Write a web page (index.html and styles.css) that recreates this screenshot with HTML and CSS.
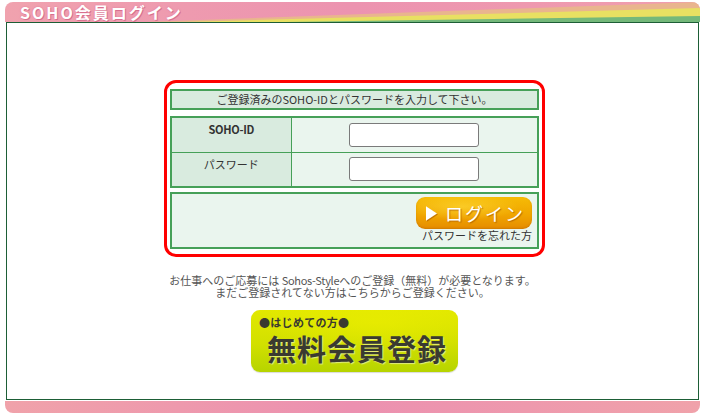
FILE: index.html
```html
<!DOCTYPE html>
<html lang="ja">
<head>
<meta charset="utf-8">
<title>SOHO会員ログイン</title>
<link rel="stylesheet" href="styles.css">
</head>
<body>
<div class="page">
  <div class="header">
    <svg class="stripes" viewBox="0 0 695 20" preserveAspectRatio="none" aria-hidden="true">
      <polygon points="140,20 695,0 695,20" fill="#e9b58e"/>
      <polygon points="180,20 695,6 695,20" fill="#e8e062"/>
      <polygon points="280,20 695,14 695,20" fill="#74b87a"/>
    </svg>
    <h1 class="title">SOHO会員ログイン</h1>
  </div>
  <div class="content">
    <div class="login-box">
      <div class="notice">ご登録済みのSOHO-IDとパスワードを入力して下さい。</div>
      <table class="form-table">
        <tr>
          <th class="label label-id">SOHO-ID</th>
          <td class="field"><input class="text-input" type="text"></td>
        </tr>
        <tr>
          <th class="label">パスワード</th>
          <td class="field"><input class="text-input" type="password"></td>
        </tr>
      </table>
      <div class="actions">
        <button class="login-btn" type="button">
          <svg class="play" viewBox="0 0 12 16" aria-hidden="true"><polygon points="0,0 12,8 0,16" fill="#fff"/></svg>
          <span>ログイン</span>
        </button>
        <a class="forgot" href="#">パスワードを忘れた方</a>
      </div>
    </div>
    <p class="info">お仕事へのご応募には <span class="brand">Sohos-Style</span>へのご登録（無料）が必要となります。<br>まだご登録されてない方はこちらからご登録ください。</p>
    <a class="register-btn" href="#">
      <span class="reg-small">●はじめての方●</span>
      <span class="reg-big">無料会員登録</span>
    </a>
  </div>
  <div class="footer"></div>
</div>
</body>
</html>
```

FILE: styles.css
```css
html, body {
  margin: 0;
  padding: 0;
  background: #fff;
}

body {
  font-family: "Noto Sans CJK JP", "Noto Sans", sans-serif;
  color: #333;
}

.page {
  width: 695px;
  margin: 2px 0 0 5px;
}

.header {
  position: relative;
  height: 20px;
  border-radius: 8px 8px 0 0;
  background: linear-gradient(to right, #f0a2ae 0%, #ec93b0 50%, #f09eae 100%);
}

.stripes {
  position: absolute;
  left: 0;
  top: 0;
  width: 100%;
  height: 100%;
  clip-path: inset(0 round 0 8px 0 0);
}

.title {
  position: relative;
  margin: 0;
  padding-left: 15px;
  font-size: 16px;
  line-height: 20px;
  font-weight: bold;
  letter-spacing: 2px;
  color: #fff;
  text-shadow: 1px 1px 0 #d8708e, 0 0 2px #e07a98;
}

.content {
  margin: 0 1px;
  border: 1px solid #1d5e36;
  padding-top: 57px;
  box-sizing: border-box;
  height: 378px;
}

.login-box {
  width: 381px;
  margin-left: 157px;
  border: 3px solid #ff0000;
  border-radius: 12px;
  padding: 6px 3px 5px 3px;
  box-sizing: border-box;
}

.notice {
  height: 21px;
  box-sizing: border-box;
  border: 2px solid #46a058;
  background: #d9ebdf;
  font-size: 11px;
  line-height: 17px;
  text-align: center;
  color: #333;
}

.form-table {
  width: 100%;
  margin-top: 6px;
  border-collapse: collapse;
  border: 2px solid #46a058;
}

.form-table th,
.form-table td {
  border: 1px solid #46a058;
  height: 35px;
  box-sizing: border-box;
  padding: 0;
}

.label {
  width: 120px;
  background: #d9ebdf;
  font-size: 11px;
  font-weight: normal;
  vertical-align: top;
  padding-top: 4px !important;
  line-height: 14px;
  color: #333;
}

.label-id {
  font-weight: bold;
  letter-spacing: -0.3px;
}

.field {
  background: #eaf5ee;
  text-align: center;
  vertical-align: middle;
}

.text-input {
  display: block;
  margin: 0 auto;
  width: 130px;
  height: 24px;
  box-sizing: border-box;
  border: 1px solid #7a7a7a;
  border-radius: 3px;
  background: #fff;
}

.actions {
  margin-top: 4px;
  height: 57px;
  box-sizing: border-box;
  border: 2px solid #46a058;
  background: #eaf5ee;
  padding: 3px 5px 0 0;
  display: flex;
  flex-direction: column;
  align-items: flex-end;
}

.login-btn {
  width: 116px;
  height: 32px;
  border: none;
  border-radius: 9px;
  background:
    radial-gradient(ellipse 70% 60% at 40% 30%, rgba(255, 220, 60, 0.6), rgba(255, 220, 60, 0) 70%),
    linear-gradient(to bottom, #f6bb06 0%, #f0a600 55%, #e68c00 100%);
  box-shadow: inset 0 -1px 2px rgba(170, 90, 0, 0.35);
  color: #fff;
  font-family: "Noto Sans CJK JP", sans-serif;
  font-size: 18px;
  line-height: 32px;
  padding: 0 0 0 10px;
  display: flex;
  align-items: center;
  gap: 8px;
  text-shadow: 1px 1px 1px rgba(170, 90, 0, 0.7);
  letter-spacing: 2px;
}

.play {
  width: 11px;
  height: 15px;
  filter: drop-shadow(1px 1px 0 rgba(170, 90, 0, 0.6));
}

.forgot {
  font-size: 11px;
  line-height: 13px;
  color: #333;
  text-decoration: none;
}

.info {
  margin: 17px 0 0 0;
  font-size: 11px;
  line-height: 12px;
  text-align: center;
  color: #555;
}

.brand {
  letter-spacing: -0.3px;
}

.register-btn {
  display: block;
  width: 207px;
  height: 62px;
  margin: 12px 0 0 244px;
  box-sizing: border-box;
  border-radius: 9px;
  background:
    radial-gradient(ellipse 80% 70% at 60% 20%, rgba(240, 240, 0, 0.5), rgba(240, 240, 0, 0) 70%),
    linear-gradient(to bottom, #e2e800 0%, #d2e000 55%, #b6d400 100%);
  box-shadow: 0 1px 1px rgba(0, 0, 0, 0.15);
  padding: 5px 0 0 8px;
  text-decoration: none;
  color: #3a3a30;
}

.reg-small {
  display: block;
  font-size: 11px;
  line-height: 14px;
  font-weight: bold;
  letter-spacing: 0.3px;
}

.reg-big {
  display: block;
  margin: 2px 0 0 8px;
  font-size: 29px;
  line-height: 34px;
  font-weight: bold;
  letter-spacing: 1px;
  text-shadow: 1px 1px 1px rgba(255, 255, 255, 0.5);
}

.footer {
  height: 12px;
  margin-top: 1px;
  border-radius: 0 0 8px 8px;
  background: linear-gradient(to right, #f0a2aa 0%, #ec90b0 50%, #f0a2aa 100%);
}
```
